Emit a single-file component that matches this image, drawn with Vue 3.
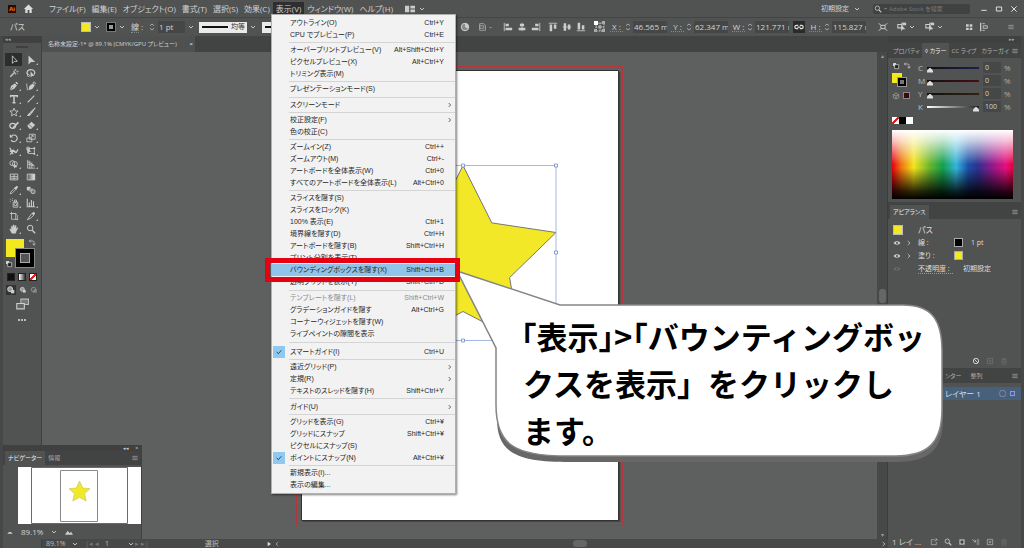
<script setup>
import { ref } from 'vue'

const menus = ['ファイル(F)', '編集(E)', 'オブジェクト(O)', '書式(T)', '選択(S)', '効果(C)', '表示(V)', 'ウィンドウ(W)', 'ヘルプ(H)']

const viewMenu = [
  { label: 'アウトライン(O)', key: 'Ctrl+Y' },
  { label: 'CPU でプレビュー(P)', key: 'Ctrl+E' },
  { sep: 1 },
  { label: 'オーバープリントプレビュー(V)', key: 'Alt+Shift+Ctrl+Y' },
  { label: 'ピクセルプレビュー(X)', key: 'Alt+Ctrl+Y' },
  { label: 'トリミング表示(M)' },
  { sep: 1 },
  { label: 'プレゼンテーションモード(S)' },
  { sep: 1 },
  { label: 'スクリーンモード', sub: true },
  { sep: 1 },
  { label: '校正設定(F)', sub: true },
  { label: '色の校正(C)' },
  { sep: 1 },
  { label: 'ズームイン(Z)', key: 'Ctrl++' },
  { label: 'ズームアウト(M)', key: 'Ctrl+-' },
  { label: 'アートボードを全体表示(W)', key: 'Ctrl+0' },
  { label: 'すべてのアートボードを全体表示(L)', key: 'Alt+Ctrl+0' },
  { sep: 1 },
  { label: 'スライスを隠す(S)' },
  { label: 'スライスをロック(K)' },
  { label: '100% 表示(E)', key: 'Ctrl+1' },
  { label: '境界線を隠す(D)', key: 'Ctrl+H' },
  { label: 'アートボードを隠す(B)', key: 'Shift+Ctrl+H' },
  { label: 'プリント分割を表示(T)' },
  { label: 'バウンディングボックスを隠す(X)', key: 'Shift+Ctrl+B', active: true },
  { label: '透明グリッドを表示(Y)', key: 'Shift+Ctrl+D' },
  { sep: 1 },
  { label: 'テンプレートを隠す(L)', key: 'Shift+Ctrl+W', off: true },
  { label: 'グラデーションガイドを隠す', key: 'Alt+Ctrl+G' },
  { label: 'コーナーウィジェットを隠す(W)' },
  { label: 'ライブペイントの隙間を表示' },
  { sep: 2 },
  { label: 'スマートガイド(I)', key: 'Ctrl+U', check: true },
  { sep: 1 },
  { label: '遠近グリッド(P)', sub: true },
  { label: '定規(R)', sub: true },
  { label: 'テキストのスレッドを隠す(H)', key: 'Shift+Ctrl+Y' },
  { sep: 1 },
  { label: 'ガイド(U)', sub: true },
  { sep: 1 },
  { label: 'グリッドを表示(G)', key: 'Ctrl+¥' },
  { label: 'グリッドにスナップ', key: 'Shift+Ctrl+¥' },
  { label: 'ピクセルにスナップ(S)' },
  { label: 'ポイントにスナップ(N)', key: 'Alt+Ctrl+¥', check: true },
  { sep: 1 },
  { label: '新規表示(I)...' },
  { label: '表示の編集...' },
]

const icons = {
  select: '<path d="M4 1v9l2.300-2.200L10 7.600z" fill="none" stroke="#ccc"/>',
  direct: '<path d="M3 .5v11l3-3h5z" fill="#ccc"/>',
  wand: '<path d="M1.500 10.500 7 5" stroke="#ccc" stroke-width="1.600"/><path d="M8 1v2.500M8 5.500V8M5 4h2M9 4h2.500M5.800 2l1 1M10.500 6.500l-1-1" stroke="#ccc"/>',
  lasso: '<path d="M3 8C0 7 1 2 5.500 2S12 5 9.500 8" fill="none" stroke="#ccc" stroke-width="1.500"/><path d="M5.500 4v7.500L7.300 9.500H10z" fill="#ccc"/><circle cx="3" cy="9" r="1.200" fill="none" stroke="#ccc"/>',
  pen: '<path d="M1 11l1.500-5L7 3l2.500 2.500L6 9.500z" fill="#ccc"/><path d="M7.500 2 9 .8 11 3 9.800 4.300z" fill="#ccc"/><path d="M1.500 10.500 5 7" stroke="#555" stroke-width=".7"/>',
  curve: '<path d="M3 11l1-5 4-3 2.500 2.500L7.500 9.500z" fill="#ccc"/><path d="M8.500 2 10 1l1.500 2-1 1zM1 3c-.5 4 1 4 .5 8" fill="none" stroke="#ccc"/>',
  type: '<path d="M2 4V2h8v2M6 2v8.500M4.200 10.500h3.600" fill="none" stroke="#ccc" stroke-width="1.700"/>',
  line: '<path d="M2 10 10 2" stroke="#ccc" stroke-width="1.300"/>',
  star: '<path d="M6 1.300 7.400 4.700l3.600.2-2.800 2.300.9 3.500L6 8.800l-3.100 1.900.9-3.500L1 4.900l3.600-.2z" fill="none" stroke="#ccc"/>',
  brush: '<path d="M11 1 5 6.500l1.500 1.300z" fill="#ccc" stroke="#ccc"/><path d="M4.500 7C2.500 7.300 3 9.500 1 10.500c3 .8 5-.3 5-2z" fill="#ccc"/>',
  shaper: '<ellipse cx="4.500" cy="7" rx="3.500" ry="3" fill="none" stroke="#ccc" stroke-width="1.500"/><path d="M4 9 10.500 2 12 3.500 5.500 9.900z" fill="#ccc"/>',
  eraser: '<path d="M1.500 7 6.500 2 11 6 6.500 10.500H4z" fill="#ccc"/><path d="M3.500 5.500 8 9.500" stroke="#555" stroke-width=".8"/>',
  rotate: '<path d="M3 3.500a4 4 0 1 1-.5 5" fill="none" stroke="#ccc" stroke-width="1.300"/><path d="M1 1.500v4h4z" fill="#ccc"/>',
  scale: '<path d="M4 1.500h7v6H4zM1 6h6v4.500H1z" fill="none" stroke="#ccc"/><path d="M5 6 8.500 3M6.500 3h2v2" fill="none" stroke="#ccc"/>',
  width: '<path d="M1 10c3 0 2-5 4-5s1 3 3 3 2-4 3-4M1 2l4 8M1 6.500h7" fill="none" stroke="#ccc" stroke-width="1.500"/>',
  free: '<path d="M1 1.500h3v3H1zM3 3h7v6H3z" fill="none" stroke="#ccc"/><path d="M1.500 2v7l2-2h3z" fill="#ccc"/><path d="M9 1.500h2v2H9zM9 8.500h2v2H9z" fill="#ccc"/>',
  shape: '<circle cx="4" cy="5" r="3" fill="none" stroke="#ccc"/><circle cx="7" cy="6" r="3" fill="none" stroke="#ccc"/><path d="M6 5v6.500l1.800-1.700H10z" fill="#ccc"/>',
  persp: '<path d="M2 1v10h9M2 3l8 5M2 6l8 2.500M4.500 2v9M7 4v7" fill="none" stroke="#ccc"/>',
  mesh: '<path d="M1.500 2.500h9v7h-9zM6 2.500v7M1.500 5c3 1.500 6-1 9 1M1.500 7.500h9" fill="none" stroke="#ccc"/>',
  grad: '<defs><linearGradient id="tg"><stop stop-color="#555"/><stop offset="1" stop-color="#eee"/></linearGradient></defs><path d="M1.500 2.500h9v7h-9z" fill="url(#tg)" stroke="#ccc"/>',
  drop: '<path d="M1.500 10.500 2 8.500 6.500 4 8 5.500 3.500 10z" fill="none" stroke="#ccc"/><path d="M6 3.500 8.500 6 11 2.500 9.500 1z" fill="#ccc"/>',
  blend: '<rect x="1" y="2" width="4.500" height="4.500" rx="1" fill="#ccc"/><rect x="4" y="4" width="4" height="4" fill="#999"/><circle cx="8.500" cy="8" r="2.500" fill="#777" stroke="#ccc"/>',
  spray: '<path d="M5 5h5.500v6H5zM6.500 2.500h2.500V5H6.500z" fill="none" stroke="#ccc"/><path d="M1 2h1M3.500 1h1M3.500 3h1M1 4.500h1M6.500 7h2.500v2H6.500z" stroke="#ccc"/>',
  graph: '<path d="M1.500 1v9.500H11M4 10V5.500M6.500 10V2.500M9 10V4" fill="none" stroke="#ccc" stroke-width="1.300"/>',
  board: '<path d="M3 1v9h8M1 3h7l2 2v6M3 3h5v7" fill="none" stroke="#ccc" stroke-width=".9"/>',
  slice: '<path d="M1.500 10.500 7 3l2.500 2L5 9z" fill="none" stroke="#ccc"/><path d="M7 3 9 1l2 1.500L9.500 5z" fill="#ccc"/>',
  hand: '<path d="M3.500 11 1 6.500c.3-1 1.200-.5 2 .5L2.800 3c.8-1 1.300 0 1.700 2l.3-3.500c.8-.8 1.300 0 1.400 0L6.500 5 7.500 2c1-.5 1.200.3 1 1L8.300 6l1.500-1.500c1-.3.8.6.500 1L8.500 9 8 11z" fill="#ccc" stroke="#ccc" stroke-width=".6"/>',
  zoom: '<circle cx="5" cy="4.800" r="3.300" fill="none" stroke="#ccc" stroke-width="1.200"/><path d="M7.500 7.500 11 11" stroke="#ccc" stroke-width="1.600"/>',
  down: '<path d="M3 4.500 6 7.500 9 4.500" fill="none" stroke="#ccc" stroke-width="1.400"/>',
  updown: '<path d="M3 4 6 1.500 9 4M3 8 6 10.500 9 8" fill="none" stroke="#bbb" stroke-width="1.200"/>',
  globe: '<circle cx="6" cy="6" r="4.500" fill="#888" stroke="#ccc" stroke-width="1.200"/><path d="M6 6V1.500A4.500 4.500 0 0 1 10 8z" fill="#ccc"/>',
  doc: '<path d="M2 2h5l2 2v6H2zM2 4.500h5v3H2z" fill="none" stroke="#aaa"/>',
  al: '<path d="M1.500 1v10" stroke="#ccc"/><path d="M3 2h4v3H3zM3 7h8v3H3z" fill="#ccc"/>',
  ac: '<path d="M6 1v10" stroke="#ccc"/><path d="M3.500 2h5v3h-5zM2 7h8v3H2z" fill="#ccc"/>',
  ar: '<path d="M10.500 1v10" stroke="#ccc"/><path d="M5 2h4v3H5zM1 7h8v3H1z" fill="#ccc"/>',
  at: '<path d="M1 1.500h10" stroke="#ccc"/><path d="M2 3h3v8H2zM7 3h3v5H7z" fill="#ccc"/>',
  am: '<path d="M1 6h10" stroke="#ccc"/><path d="M2 1.500h3v9H2zM7 3h3v6H7z" fill="#ccc"/>',
  ab: '<path d="M1 10.500h10" stroke="#ccc"/><path d="M2 1h3v8H2zM7 4h3v5H7z" fill="#ccc"/>',
  ref: '<path d="M2 2h8v8H2zM6 2v8M2 6h8" fill="none" stroke="#ccc" stroke-dasharray="1 .8"/><path d="M0 0h4v4H0z" fill="#fff"/><path d="M8 0h3v3H8zM8 8h3v3H8zM0 8h3v3H0zM4.500 4.500h3v3h-3z" fill="#aaa"/>',
  link: '<path d="M5 4H3a2 2 0 0 0 0 4h2M7 4h2a2 2 0 0 1 0 4H7M4 6h4" fill="none" stroke="#ddd" stroke-width="1.500"/>',
  iso: '<path d="M3.500 4h5v4h-5zM1 1.500 3.500 4M11 1.500 8.500 4M1 10.500 3.500 8M11 10.500 8.500 8" fill="none" stroke="#ccc" stroke-width="1.200"/>',
  same: '<path d="M1 3h5v4H1zM5 1.500h5" fill="none" stroke="#ccc" stroke-width="1.300"/><path d="M5 3v8l2-2.200h3zM7 1h4v3H7z" fill="#ccc"/>',
  four: '<path d="M1.500 2h4v3.500h-4zM7 2h4v3.500H7zM1.500 7h4v3.500h-4zM7 7h4v3.500H7z" fill="#ccc"/>',
  dock: '<path d="M2 1v10" stroke="#ccc" stroke-width="1.500"/><path d="M4 2h3M4 10h3M5 4.500h5v3H5z" fill="none" stroke="#ccc"/>',
  burger: '<path d="M2 3.500h8M2 6h8M2 8.500h8" stroke="#aaa"/>',
  eye: '<path d="M.8 6C3 2.600 9 2.600 11.200 6 9 9.400 3 9.400.8 6z" fill="#ccc"/><circle cx="6" cy="6" r="1.600" fill="#555"/>',
  right: '<path d="M4 3l3.500 3L4 9" fill="none" stroke="#bbb" stroke-width="1.300"/>',
  left: '<path d="M8 3 4.500 6 8 9" fill="none" stroke="#aaa" stroke-width="1.200"/>',
  swap: '<path d="M2 3h5a2 2 0 0 1 2 2v4M4 1 2 3l2 2M7 7l2 2.500L11 7" fill="none" stroke="#bbb" stroke-width="1.300"/>',
  mini: '<path d="M1 1h6v6H1z" fill="#eee" stroke="#222"/><path d="M4 4h6v6H4z" fill="#222" stroke="#ddd"/>',
  cube: '<path d="M6 1.500 10 4v4.500L6 10.500 2 8.500V4zM2 4l4 2 4-2M6 6v4.500" fill="none" stroke="#aaa"/>',
  ban: '<circle cx="6" cy="6" r="4" fill="none" stroke="#ccc" stroke-width="1.500"/><path d="M3 3l6 6" stroke="#ccc" stroke-width="1.500"/>',
  dup: '<path d="M2 2h8v8H2zM4 6h4M6 4v4" fill="none" stroke="#777"/>',
  plus: '<path d="M2 2h8v8H2zM4 6h4M6 4v4" fill="none" stroke="#bbb"/>',
  trash: '<path d="M3 3.500h6V11H3zM2 3h8M5 1.500h2M5 5v4M7 5v4" fill="none" stroke="#6e6e6e"/>',
  export: '<path d="M7 2.500H2V10h7.500V6M7 5.500 10.500 1.500M8 1.500h2.500V4" fill="none" stroke="#bbb"/>',
  mask: '<path d="M2 2h8v8H2z" fill="#bbb"/><circle cx="6" cy="6" r="2.500" fill="#444"/>',
  sub: '<path d="M1 2l2 3h3M4 3l2 2-2 2M7 3h4M7 6h4M7 9h4" fill="none" stroke="#bbb" stroke-width="1.200"/>',
  mount: '<path d="M0 10 4 4l3 4 2-2.500L12 10z" fill="#ccc"/>',
  hill: '<path d="M2 8.500 4.500 6h3L10 8.500z" fill="#ccc"/>',
  normal: '<circle cx="5" cy="5" r="3" fill="#999" stroke="#ddd"/><path d="M6 6h4v4H6z" fill="#ccc"/>',
  inside: '<circle cx="5.500" cy="5.500" r="3.500" fill="none" stroke="#aaa"/><path d="M5 5h5v5H5z" fill="#888"/>',
  screens: '<path d="M4.500 1h7v5h-7z" fill="#777" stroke="#bbb"/><path d="M.7 5h7v5h-7z" fill="#666" stroke="#ccc"/>',
  check: '<path d="M2.500 6 5 8.500 9.500 3.500" fill="none" stroke="#234" stroke-width="1.300"/>',
  home: '<path d="M1 6.500 6 1.500l5 5H9.500V11h-2.500V7.500H5V11H2.500V6.500z" fill="#ddd"/>',
  space: '<path d="M0 2h5v8H0zM6.500 2H12v3.500H6.500zM6.500 6.500H12V10H6.500z" fill="#ccc"/>',
  play: '<path d="M4 2.500 9 6 4 9.500z" fill="#ddd"/>',
}

const tools = ['select', 'direct', 'wand', 'lasso', 'pen', 'curve', 'type', 'line', 'star', 'brush', 'shaper', 'eraser', 'rotate', 'scale', 'width', 'free', 'shape', 'persp', 'mesh', 'grad', 'drop', 'blend', 'spray', 'graph', 'board', 'slice', 'hand', 'zoom']
const plain = ['select', 'wand', 'lasso', 'mesh', 'grad', 'blend', 'board', 'zoom']

const coords = [
  { id: 'X', v: '46.565 mm' },
  { id: 'Y', v: '62.347 mm' },
  { id: 'W', v: '121.771 mm' },
  { id: 'H', v: '115.827 mm' },
]
const inks = ref([
  { id: 'C', v: 0 },
  { id: 'M', v: 0 },
  { id: 'Y', v: 0 },
  { id: 'K', v: 100 },
])
</script>

<template>
  <div class="app" lang="ja">
    <header class="menubar">
      <span class="logo">Ai</span>
      <button class="home" aria-label="ホーム"><svg class="i12" viewBox="0 0 12 12" v-html="icons.home" /></button>
      <nav class="menus">
        <button v-for="m in menus" :key="m" :class="{ open: m.startsWith('表示') }">{{ m }}</button>
      </nav>
      <button class="arr" aria-label="ドキュメントの配置"><svg class="i10" viewBox="0 0 12 12" v-html="icons.space" /><svg class="i8" viewBox="0 0 12 12" v-html="icons.down" /></button>
      <button class="workspace">初期設定<svg class="i8" viewBox="0 0 12 12" v-html="icons.down" /></button>
      <label class="search">
        <svg class="i8" viewBox="0 0 12 12" v-html="icons.zoom" />
        <svg class="i5" viewBox="0 0 12 12" v-html="icons.down" />
        <input type="text" placeholder="Adobe Stock を検索" aria-label="Adobe Stock を検索">
      </label>
      <div class="winctl">
        <button aria-label="最小化"><svg class="i8" viewBox="0 0 12 12"><path d="M2 8h8" stroke="#ddd" stroke-width="1.500" /></svg></button>
        <button aria-label="最大化"><svg class="i8" viewBox="0 0 12 12"><path d="M2 3h8v6H2z" fill="none" stroke="#ddd" stroke-width="1.500" /></svg></button>
        <button aria-label="閉じる"><svg class="i8" viewBox="0 0 12 12"><path d="M2 2l8 8M10 2l-8 8" stroke="#ddd" stroke-width="1.500" /></svg></button>
      </div>
    </header>

    <div class="control">
      <div class="ctl-left">
        <span class="kind">パス</span>
        <button class="sw yellow" aria-label="塗り" /><svg class="i8 chev" viewBox="0 0 12 12" v-html="icons.down" />
        <button class="sw ring" aria-label="線" /><svg class="i8 chev" viewBox="0 0 12 12" v-html="icons.down" />
        <label class="stroke" for="sw"><u>線</u> :</label>
        <svg class="i8" viewBox="0 0 12 12" v-html="icons.updown" />
        <input id="sw" class="pt" value="1 pt">
        <svg class="i8 ptc" viewBox="0 0 12 12" v-html="icons.down" />
        <button class="profile"><i />均等</button><svg class="i8 chev" viewBox="0 0 12 12" v-html="icons.down" />
        <button class="profile" aria-label="ブラシ定義"><i /></button>
      </div>
      <svg class="i10" viewBox="0 0 12 12" v-html="icons.globe" />
      <span class="pair docs"><svg class="i10" viewBox="0 0 12 12" v-html="icons.doc" /><svg class="i5" viewBox="0 0 12 12" v-html="icons.down" /></span>
      <span class="aligns">
        <button v-for="a in ['al', 'ac', 'ar', 'at', 'am', 'ab']" :key="a" :aria-label="a"><svg class="i10" viewBox="0 0 12 12" v-html="icons[a]" /></button>
      </span>
      <svg class="i12" viewBox="0 0 12 12" v-html="icons.ref" />
      <template v-for="c in coords" :key="c.id">
        <button v-if="c.id === 'H'" class="link" aria-label="縦横比を固定"><svg class="i10" viewBox="0 0 12 12" v-html="icons.link" /></button>
        <label class="coord"><u>{{ c.id }} :</u><svg class="i8" viewBox="0 0 12 12" v-html="icons.updown" /><input :value="c.v"></label>
      </template>
      <span class="extras">
        <svg class="i10" viewBox="0 0 12 12" v-html="icons.iso" />
        <span class="pair"><svg class="i10" viewBox="0 0 12 12" v-html="icons.same" /><svg class="i8" viewBox="0 0 12 12" v-html="icons.down" /></span>
        <span class="pair"><svg class="i10" viewBox="0 0 12 12" v-html="icons.same" /><svg class="i8" viewBox="0 0 12 12" v-html="icons.down" /></span>
      </span>
      <span class="ends">
        <svg class="i8" viewBox="0 0 12 12" v-html="icons.four" />
        <svg class="i10" viewBox="0 0 12 12" v-html="icons.dock" />
        <svg class="i8 last" viewBox="0 0 12 12" v-html="icons.burger" />
      </span>
    </div>

    <main class="main">
      <aside class="toolbox">
        <div class="tb-head">◂◂</div>
        <div class="grip" />
        <div class="tools">
          <button v-for="t in tools" :key="t" :class="{ on: t === 'select', more: !plain.includes(t) }" :aria-label="t"><svg class="i10" viewBox="0 0 12 12" v-html="icons[t]" /></button>
        </div>
        <div class="fills">
          <span class="fill" /><span class="line" />
          <svg class="i8 f-swap" viewBox="0 0 12 12" v-html="icons.swap" />
          <svg class="i8 f-mini" viewBox="0 0 12 12" v-html="icons.mini" />
        </div>
        <div class="modes"><span class="m solid" /><span class="m grad" /><span class="m none" /></div>
        <div class="modes draw">
          <svg class="i10 on" viewBox="0 0 12 12" v-html="icons.normal" />
          <svg class="i8" viewBox="0 0 12 12" v-html="icons.normal" />
          <svg class="i8" viewBox="0 0 12 12" v-html="icons.inside" />
        </div>
        <svg class="screens" viewBox="0 0 12 11" v-html="icons.screens" />
        <div class="dots"><i /><i /><i /></div>
      </aside>

      <section class="center">
        <div class="tabs"><div class="doc">名称未設定-1* @ 89.1% (CMYK/GPU プレビュー) <b>×</b></div></div>
        <div class="stage">
          <div class="canvas">
            <svg class="art" aria-hidden="true">
              <g transform="translate(-42 -52)">
                <path d="M296.500 66.500h326v459h-326z" fill="none" stroke="#b8353c" />
                <path d="M303 72h317.500v450H303z" fill="#444" />
                <path d="M301.500 70.500h317v450h-317z" fill="#fff" stroke="#333" />
                <path d="M463 165.500 491.800 222.900 556 232.500 509.600 277.600 520.500 341.500 463 311.500 405.500 341.500 416.400 277.600 370 232.500 434.200 222.900z" fill="#f2e827" stroke="#777" />
                <path d="M370 165.500h186v175H370z" fill="none" stroke="#8ea6d8" stroke-width=".8" />
                <g fill="#fff" stroke="#6c8cc8" stroke-width=".8">
                  <path d="M461.500 164h3v3h-3zM554.500 164h3v3h-3zM554.500 251h3v3h-3zM461.500 339h3v3h-3z" />
                </g>
              </g>
            </svg>
          </div>
          <div class="vscroll"><span class="tri">▴</span><span class="thumb" /><span class="tri">▾</span></div>
        </div>
        <footer class="status">
          <span class="z">89.1%</span><svg class="i8" viewBox="0 0 12 12" v-html="icons.down" />
          <span class="pg dim">|◂ ◂</span><span class="one">1</span><svg class="i8" viewBox="0 0 12 12" v-html="icons.down" />
          <span class="dim">▸ ▸|</span>
          <span class="mode">選択</span>
          <svg class="i8" viewBox="0 0 12 12" v-html="icons.play" />
          <svg class="i8" viewBox="0 0 12 12" v-html="icons.left" />
          <span class="track"><span /></span>
          <svg class="i8" viewBox="0 0 12 12" v-html="icons.right" />
        </footer>
      </section>

      <aside class="dock">
        <div class="dock-head">▸▸</div>
        <div class="ptabs">
          <button>プロパティ</button><button class="on">◊ カラー</button><button>CC ライブ</button><button>カラーガイ</button>
          <svg class="i8 burger" viewBox="0 0 12 12" v-html="icons.burger" />
        </div>
        <div class="color">
          <div class="swatches">
            <div class="mini"><svg class="i8" viewBox="0 0 12 12" v-html="icons.mini" /><svg class="i8" viewBox="0 0 12 12" v-html="icons.swap" /></div>
            <div class="duo"><span class="fill" /><span class="line" /></div>
            <div class="gamut"><svg class="i8" viewBox="0 0 12 12" v-html="icons.cube" /><span /></div>
          </div>
          <div class="inks">
            <label v-for="k in inks" :key="k.id" class="ink">
              <span>{{ k.id }}</span>
              <input v-model="k.v" type="range" min="0" max="100" :class="k.id">
              <input v-model="k.v" class="num" :aria-label="k.id + ' 値'">
              <em>%</em>
            </label>
          </div>
          <div class="basics"><span class="none" /><span class="blk" /><span class="wht" /></div>
          <div class="spectrum" />
        </div>
        <div class="ptabs second"><button class="on">アピアランス</button><svg class="i8 burger" viewBox="0 0 12 12" v-html="icons.burger" /></div>
        <div class="appear">
          <div class="arow"><span class="sw yellow" /><span class="obj">パス</span></div>
          <div class="arow"><svg class="i8" viewBox="0 0 12 12" v-html="icons.eye" /><svg class="i8 tw" viewBox="0 0 12 12" v-html="icons.right" /><u>線 :</u><span class="chip blk" /><span>1 pt</span></div>
          <div class="arow"><svg class="i8" viewBox="0 0 12 12" v-html="icons.eye" /><svg class="i8 tw" viewBox="0 0 12 12" v-html="icons.right" /><u>塗り :</u><span class="chip yel" /></div>
          <div class="arow"><svg class="i8 faint" viewBox="0 0 12 12" v-html="icons.eye" /><span class="i8 tw" /><u class="op">不透明度 :</u><span>初期設定</span></div>
          <div class="afoot">
            <svg class="i8" viewBox="0 0 12 12" v-html="icons.ban" />
            <svg class="i8" viewBox="0 0 12 12" v-html="icons.dup" />
            <svg class="i8" viewBox="0 0 12 12" v-html="icons.trash" />
          </div>
        </div>
        <div class="ptabs third"><button class="mid">ンター</button><button>整列</button><svg class="i8 burger" viewBox="0 0 12 12" v-html="icons.burger" /></div>
        <div class="layers">
          <div class="layer"><svg class="i8" viewBox="0 0 12 12" v-html="icons.eye" /><span class="nm">レイヤー 1</span><span class="tgt">○</span><span class="sq" /></div>
        </div>
        <div class="lfoot">
          <span>1 レイ ...</span>
          <svg v-for="n in ['export', 'zoom', 'mask', 'sub', 'plus', 'trash']" :key="n" class="i8" viewBox="0 0 12 12" v-html="icons[n]" />
        </div>
      </aside>
    </main>

    <section class="navi">
      <div class="nv-head"><span>◂◂</span><span>×</span></div>
      <div class="ptabs"><button class="on">ナビゲーター</button><button>情報</button><svg class="i8 burger" viewBox="0 0 12 12" v-html="icons.burger" /></div>
      <svg class="thumbnail" viewBox="0 0 123 57" aria-hidden="true">
        <path d="M0 0h123v57H0z" fill="#fff" />
        <path d="M42.500 3.500h37v51h-37z" fill="#fff" stroke="#888" />
        <path d="M61.500 14 64.700 21 72 21.700 66.600 26.700 68.200 34 61.500 30.300 54.800 34 56.400 26.700 51 21.700 58.300 21z" fill="#f2e827" stroke="#bdb64a" stroke-width=".5" />
        <path d="M13.500.5h96v56h-96z" fill="none" stroke="#e33" />
      </svg>
      <div class="nv-foot"><svg class="i8" viewBox="0 0 12 12" v-html="icons.hill" /><span>89.1%</span><svg class="i8" viewBox="0 0 12 12" v-html="icons.down" /><svg class="i8" viewBox="0 0 12 12" v-html="icons.mount" /></div>
    </section>

    <div class="menu" role="menu" aria-label="表示">
      <template v-for="(m, i) in viewMenu" :key="i">
        <div v-if="m.sep" class="sep" :class="{ wide: m.sep === 2 }" role="separator" />
        <button v-else class="item" role="menuitem" :class="{ active: m.active }" :disabled="m.off">
          <span class="tick" :class="{ on: m.check }"><svg v-if="m.check" class="i8" viewBox="0 0 12 12" v-html="icons.check" /></span>
          <span class="label">{{ m.label }}</span>
          <kbd>{{ m.key }}</kbd>
          <span class="sub"><svg v-if="m.sub" class="i8" viewBox="0 0 12 12"><path d="M4 3l3 3-3 3" fill="none" stroke="#444" stroke-width="1.200" /></svg></span>
        </button>
      </template>
    </div>

    <div class="callout">
      <svg viewBox="0 0 490 194" aria-hidden="true">
        <path d="M42 80V150C42 182 60 193 110 193H440C474 193 488 181 488 150V80z" fill="#696666" />
        <path d="M2 2 105 36H448C476 36 487 50 487 82V140C487 173 474 187 440 187H112C60 187 41 176 41 136V79z" fill="#fff" stroke="#858585" stroke-width="1.500" />
      </svg>
      <p><span class="tight">「表示」&gt;「バウンティングボッ</span><span>クスを表示」をクリックし</span><span>ます。</span></p>
    </div>
  </div>
</template>

<style>
body { background: #fff; }
</style>

<style scoped>
* { box-sizing: border-box; }
.app {
  position: relative; height: 100vh; min-height: 520px; padding-bottom: 6px;
  display: flex; flex-direction: column; overflow: hidden; background: #fff; color: #d2d2d2;
  font: 8px/12px "Open Sans", "Noto Sans CJK JP", sans-serif; font-feature-settings: "palt"; white-space: nowrap;
}
button, input { font: inherit; font-feature-settings: inherit; color: inherit; border: 0; padding: 0; margin: 0; background: none; border-radius: 0; min-width: 0; }
svg { display: block; flex: none; overflow: visible; }
.i12 { width: 12px; height: 12px; } .i10 { width: 10px; height: 10px; } .i8 { width: 8px; height: 8px; } .i5 { width: 5px; height: 5px; }
u { text-decoration: none; border-bottom: 1px dotted #888; line-height: 9px; }

.menubar { height: 17px; flex: none; display: flex; align-items: center; background: #515352; padding-left: 8px; }
.logo { width: 8px; height: 8px; background: #2c0b00; color: #f28a1c; font: bold 6px/8px "Liberation Sans", sans-serif; text-align: center; }
.home { margin: 0 12px 0 7px; }
.home svg { width: 11px; height: 11px; }
.menus { display: flex; }
.menus button { padding: 0 3px; height: 14px; line-height: 12px; }
.menus .open { background: #2e2e2e; }
.arr { display: flex; align-items: center; gap: 3px; margin-left: 9px; }
.workspace { display: flex; align-items: center; gap: 4px; margin-left: auto; font-size: 7px; }
.search { display: flex; align-items: center; gap: 1px; width: 97px; height: 10px; background: #404141; margin: 0 10px 0 12px; padding-left: 1px; border-radius: 2px; }
.search input { flex: 1; font-size: 6px; line-height: 10px; }
.search input::placeholder { color: #7b7b7b; }
.winctl { display: flex; gap: 7px; margin-right: 6px; }

.control { height: 19px; flex: none; display: flex; align-items: center; background: #515352; border-top: 1px solid #454545; }
.ctl-left { flex: 0 0 460px; display: flex; align-items: center; padding-left: 10px; }
.kind { width: 71px; }
.sw { width: 10px; height: 10px; flex: none; border: 1px solid #bbb; }
.yellow { background: #f2e827; }
.ring { border: 3px solid #000; background: #999; outline: 1px solid #777; outline-offset: -1px; }
.chev { margin: 0 5px 0 2px; }
.stroke { width: 17px; }
.pt { width: 27px; height: 12px; background: #454747; padding-left: 1px; margin: 0 2px; }
.ptc { margin-right: 4px; }
.profile { display: flex; align-items: center; gap: 3px; width: 48px; height: 11px; background: #eaeaea; color: #333; font-size: 7px; padding-left: 3px; }
.profile i { width: 26px; height: 2px; background: #111; }
.pair { display: flex; align-items: center; gap: 1px; }
.docs { margin-left: 8px; gap: 0; }
.aligns { display: flex; gap: 4px; margin: 0 8px 0 10px; }
.aligns button:nth-child(4) { margin-left: 3px; }
.coord { display: flex; align-items: center; margin-left: 4px; }
.coord u { width: 13px; text-align: center; }
.coord input { width: 34px; height: 12px; background: #454747; overflow: hidden; padding-left: 1px; }
.coord .i8 { margin: 0 1px; }
.link { width: 12px; height: 12px; background: #2b2b2b; margin-left: 4px; display: grid; place-items: center; }
.extras { display: flex; align-items: center; gap: 9px; margin-left: 12px; }
.ends { display: flex; align-items: center; gap: 6px; margin-left: auto; margin-right: 9px; }
.ends .last { margin-left: 12px; }

.main { flex: 1; min-height: 0; display: flex; background: #515352; }
.toolbox { width: 42px; flex: none; border-left: 3px solid #474747; border-right: 1px solid #404040; display: flex; flex-direction: column; align-items: center; }
.tb-head { align-self: stretch; height: 7px; background: #404040; font-size: 5px; line-height: 7px; color: #aaa; padding-left: 2px; }
.grip { width: 12px; height: 2px; background: #3f3f3f; margin: 3px 0 5px; }
.tools { display: grid; grid-template-columns: 17px 17px; grid-auto-rows: 13px; }
.tools button { position: relative; display: grid; place-items: center; }
.tools .on { background: #2c2e2d; }
.more::after { content: ""; position: absolute; right: 1px; bottom: 1px; border: 1px solid #bbb; border-top-color: transparent; border-left-color: transparent; }
.fills { position: relative; width: 34px; height: 34px; margin-top: 1px; }
.fills .fill { position: absolute; left: 1px; top: 3px; width: 18px; height: 18px; background: #f2ea1e; }
.fills .line { position: absolute; left: 11px; top: 13px; width: 18px; height: 18px; border: 4px solid #000; background: #555; outline: 1px solid #888; box-shadow: inset 0 0 0 1px #aaa; }
.f-swap { position: absolute; right: 3px; top: 3px; }
.f-mini { position: absolute; left: 0; top: 24px; }
.modes { display: flex; align-items: center; gap: 3px; height: 13px; }
.m { width: 8px; height: 8px; border: 1px solid #222; }
.solid { background: #111; } .m.grad { background: linear-gradient(90deg, #fff, #333); } .m.none, .basics .none { background: linear-gradient(to bottom left, #fff 40%, #e02020 40% 60%, #fff 60%); transform: scaleX(-1); }
.m.none, .basics .none { background: linear-gradient(to bottom right, #fff 40%, #e02020 40% 60%, #fff 60%); transform: none; }
.draw .on { background: #333; }
.screens { width: 13px; height: 12px; margin-top: 2px; }
.dots { display: flex; gap: 1px; margin-top: 9px; }
.dots i { width: 2px; height: 2px; background: #bbb; }

.center { flex: 1; min-width: 0; display: flex; flex-direction: column; }
.tabs { height: 16px; flex: none; background: #424343; display: flex; }
.doc { background: #4f5150; width: 153px; padding: 0 2px 0 6px; font-size: 6px; line-height: 16px; display: flex; justify-content: space-between; }
.stage { flex: 1; min-height: 0; display: flex; }
.canvas { flex: 1; position: relative; background: #5e605f; overflow: hidden; }
.art { position: absolute; inset: 0; width: 100%; height: 100%; }
.vscroll { width: 11px; background: #474949; display: flex; flex-direction: column; align-items: center; justify-content: space-between; border-right: 1px solid #3d3d3d; }
.tri { font-size: 6px; line-height: 8px; color: #999; }
.thumb { width: 7px; height: 14px; background: #666; border-radius: 3px; }
.status { height: 9px; flex: none; display: flex; align-items: center; background: #474949; font-size: 7px; line-height: 9px; color: #bbb; overflow: hidden; }
.z { width: 26px; padding-left: 4px; margin-right: 3px; }
.dim { color: #777; } .pg { width: 24px; padding-left: 6px; } .one { width: 22px; margin-left: 2px; }
.status .dim + .mode { margin-left: 56px; width: 60px; }
.track { flex: 1; display: flex; justify-content: center; }
.track span { width: 14px; height: 7px; background: #666; border-radius: 4px; }

.dock { width: 136px; flex: none; display: flex; flex-direction: column; border-right: 3px solid #474747; }
.dock-head { height: 7px; background: #404040; font-size: 5px; line-height: 7px; color: #aaa; text-align: right; padding-right: 6px; }
.ptabs { height: 15px; flex: none; display: flex; align-items: center; background: #424343; font-size: 6px; padding-left: 2px; color: #b0b0b0; }
.ptabs button { padding: 0 3px; height: 15px; }
.ptabs .on { background: #515352; color: #eee; }
.burger { margin-left: auto; margin-right: 2px; }
.color { display: grid; grid-template-columns: 26px minmax(0, 1fr); padding: 3px 6px 3px 4px; border-bottom: 3px solid #424343; }
.swatches { display: flex; flex-direction: column; gap: 1px; padding-top: 1px; }
.mini, .gamut { display: flex; gap: 3px; height: 8px; }
.duo { position: relative; height: 20px; }
.duo .fill { position: absolute; left: 0; top: 2px; width: 10px; height: 10px; background: #f2ea1e; }
.duo .line { position: absolute; left: 6px; top: 7px; width: 8px; height: 8px; border: 2px solid #000; background: #777; outline: 1px solid #999; }
.gamut span { width: 7px; height: 7px; background: #3c0808; border: 1px solid #888; }
.ink { display: flex; align-items: center; height: 13px; font-size: 8px; }
.ink > span { width: 9px; flex: none; color: #bbb; }
.ink em { width: 8px; flex: none; font-style: normal; color: #aaa; margin: 0 3px; }
.ink input[type="range"] { appearance: none; flex: 1; width: 0; height: 12px; }
.ink input::-webkit-slider-runnable-track { height: 2px; background: linear-gradient(90deg, #111, #1b1f52); }
.ink .M::-webkit-slider-runnable-track { background: linear-gradient(90deg, #111, #4a0d14); }
.ink .Y::-webkit-slider-runnable-track { background: linear-gradient(90deg, #111, #33230a); }
.ink .K::-webkit-slider-runnable-track { background: linear-gradient(90deg, #fff, #222); }
.ink input::-webkit-slider-thumb { appearance: none; width: 6px; height: 5px; margin-top: 1px; background: #ddd; clip-path: polygon(50% 0, 100% 60%, 100% 100%, 0 100%, 0 60%); }
.ink .num { width: 18px; height: 11px; background: #464848; margin-left: 4px; padding-left: 2px; font-size: 7px; flex: none; }
.basics { grid-column: 1 / 3; display: flex; margin: 4px 0 6px; }
.basics span { width: 7px; height: 7px; }
.blk { background: #000; } .wht { background: #fff; }
.spectrum { grid-column: 1 / 3; height: 69px; margin-right: 2px; background:
  linear-gradient(180deg, #fff 0, rgba(255,255,255,.75) 15%, rgba(255,255,255,0) 50%, rgba(0,0,0,0) 55%, rgba(0,0,0,.8) 88%, #000 100%),
  linear-gradient(90deg, #e60012 0, #ef7a10 8%, #f2e41c 18%, #62b32f 32%, #12a04a 42%, #35b4dc 53%, #1c50a8 63%, #303090 71%, #8b1a8a 82%, #e4107e 94%, #e60040 100%); }
.second { height: 14px; }
.appear { flex: 0 0 149px; display: flex; flex-direction: column; padding: 4px 6px 0 5px; }
.arow { display: flex; align-items: center; height: 13px; color: #ddd; }
.arow .i8:first-child { margin-right: 4px; }
.tw { margin-right: 5px; }
.arow u { width: 36px; border: 0; } .arow .op { width: 35px; border-bottom: 1px dotted #999; margin-right: 10px; }
.arow { font-size: 7px; }
.obj { margin-left: 15px; font-size: 8px; }
.chip { width: 9px; height: 9px; border: 1px solid #aaa; margin-right: 8px; }
.yel { background: #f2ea1e; }
.faint { opacity: .2; }
.afoot { margin: auto 7px 1px auto; display: flex; gap: 6px; height: 10px; }
.third .mid { margin-left: 52px; margin-right: 3px; }
.layers { flex: 1; padding-top: 4px; }
.layer { display: flex; align-items: center; height: 13px; background: #47617c; color: #ddd; padding: 0 6px 0 5px; }
.nm { margin-left: 44px; flex: 1; }
.tgt { font-size: 7px; margin-right: 4px; } .sq { width: 5px; height: 5px; background: #3b5bd8; border: 1px solid #99b; }
.lfoot { display: flex; align-items: center; gap: 6px; height: 12px; padding: 0 13px 0 4px; }
.lfoot span { flex: 1; }

.navi { position: absolute; left: 0; bottom: 15px; width: 142px; background: #515352; border-left: 3px solid #474747; border-right: 1px solid #404040; }
.nv-head { height: 6px; background: #404040; display: flex; justify-content: flex-end; gap: 6px; padding-right: 3px; font-size: 5px; line-height: 6px; }
.navi .ptabs { height: 14px; }
.navi .ptabs button { height: 14px; }
.thumbnail { width: 123px; margin: 2px 0 0 15px; }
.nv-foot { display: flex; align-items: center; height: 15px; padding-left: 3px; gap: 7px; font-size: 8px; }

.menu { position: absolute; left: 271px; top: 14px; width: 185px; height: 480px; padding: 2px 0; background: #f2f2f2; border: 1px solid #b0b0b0; display: flex; flex-direction: column; box-shadow: 1px 1px 2px rgba(0,0,0,.5); color: #262626; font-size: 7px; font-family: "Liberation Sans", "Noto Sans CJK JP", sans-serif; }
.item { position: relative; display: flex; align-items: center; height: 12px; flex: none; text-align: left; }
.item:disabled { color: #8c8c8c; }
.tick { width: 12px; height: 12px; margin: 0 5px 0 1px; display: grid; place-items: center; flex: none; }
.tick.on { background: #90c8f0; }
.label { flex: 1; }
kbd { font: inherit; }
.sub { width: 11px; padding-left: 2px; }
.sep { flex: 1; display: flex; align-items: center; margin-left: 17px; }
.sep.wide { flex: 2; }
.sep::before { content: ""; height: 1px; flex: 1; background: #d4d4d4; }
.active { background: #90c4e8; z-index: 1; }
.active::after { content: ""; position: absolute; inset: -6px -5px -6px -7px; border: 5px solid #e60012; }

.callout { position: absolute; left: 455px; top: 269px; width: 490px; }
.callout svg { width: 100%; }
.callout p { position: absolute; left: 66px; top: 43px; margin: 0; color: #000; font: bold 31px/47px "Noto Sans CJK JP", sans-serif; font-feature-settings: normal; }
.callout span { display: block; margin-left: 2px; }
.callout .tight { font-feature-settings: "halt"; margin-left: 0; }
</style>
